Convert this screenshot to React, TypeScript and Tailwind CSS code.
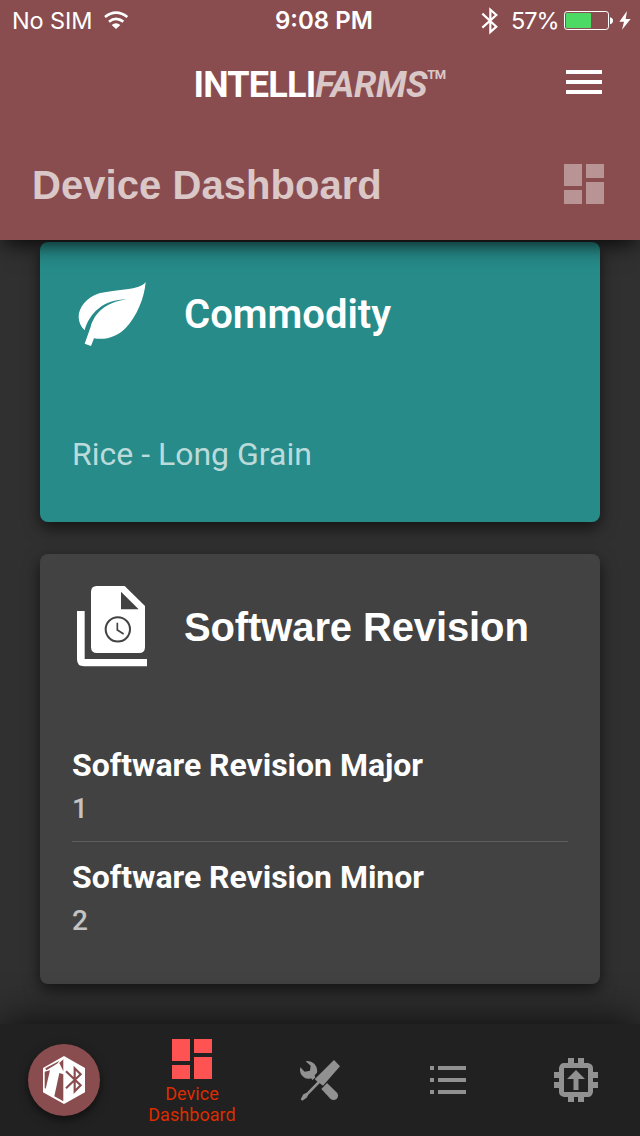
import type { ReactNode } from "react";

function WifiIcon() {
  return (
    <svg width="26" height="20" viewBox="310 33 78 60" fill="none" stroke="#fff" strokeWidth="8">
      <path d="M316 51Q349 25 383 51" />
      <path d="M328 65Q349 48 371 65" />
      <path d="M336 75Q349 65 362 75L349 87Z" fill="#fff" stroke="none" />
    </svg>
  );
}

function BluetoothIcon() {
  return (
    <svg width="18" height="28" viewBox="483 20 54 84" fill="none" stroke="#fff" strokeWidth="6.500">
      <path d="M487 40L529 79L511 95V28L529 44L487 82" />
    </svg>
  );
}

function BatteryIcon() {
  return (
    <svg width="49" height="20" viewBox="732 32 147 60">
      <rect x="733.5" y="33.5" width="132" height="54" rx="8" fill="none" stroke="#fff" strokeWidth="3" />
      <rect x="738" y="38" width="75" height="45" rx="3" fill="#4cd964" />
      <path d="M870 51Q879 53 879 61T870 72Z" fill="#fff" />
    </svg>
  );
}

function BoltIcon() {
  return (
    <svg width="12" height="20" viewBox="896 32 36 60" fill="#fff">
      <path d="M920 32L897 64H911L905 88L931 56H916Z" />
    </svg>
  );
}

function DashboardIcon({ className }: { className: string }) {
  return (
    <svg width="40" height="40" viewBox="0 0 40 40" className={className} fill="currentColor">
      <path d="M0 0H18V22H0ZM22 0H40V14H22ZM22 18H40V40H22ZM0 26H18V40H0Z" />
    </svg>
  );
}

function LeafIcon() {
  return (
    <svg width="68" height="64" viewBox="144 66 204 192" fill="#fff">
      <path d="M347 66C338 78 318 84 290 88C255 93 228 95 208 100C170 111 146 143 146 171C147 189 154 201 164 211C178 160 220 118 290 118C225 128 195 158 182 200L164 251L183 258L192 235C228 241 262 230 287 204C320 170 343 115 347 66Z" />
    </svg>
  );
}

function FileHistoryIcon() {
  return (
    <svg width="70" height="81" viewBox="51 47 210 243">
      <path d="M51 122H74V266H261V288H72Q51 288 51 267Z" fill="#fff" />
      <path d="M110 47H194L255 107V230Q255 248 237 248H111Q93 248 93 230V65Q93 47 110 47Z" fill="#fff" />
      <path d="M183 64V117H236Z" fill="#424242" />
      <g fill="none" stroke="#424242">
        <circle cx="173.500" cy="177" r="36.500" strokeWidth="6" />
        <path d="M172 157V179L191 191" strokeWidth="5" />
      </g>
    </svg>
  );
}

function HexagonLogo() {
  return (
    <svg width="42" height="48" viewBox="129 288 126 144">
      <path d="M192 288L255 324V397L192 432L129 397V324Z" fill="#fff" />
      <g fill="#8a4d4f">
        <path d="M190 298V334L178 309Z" />
        <path d="M136 325L179 302L171 311L139 331Z" />
        <path d="M134 335L150 331L137 386L134 384Z" />
        <path d="M178 339L190 343V424L163 409Z" />
      </g>
      <path d="M198 334L242 376L224 394V325L242 343L198 385" fill="none" stroke="#8a4d4f" strokeWidth="6.500" />
    </svg>
  );
}

function ToolsIcon() {
  return (
    <svg width="40" height="41" viewBox="60 59 120 123" fill="#919191">
      <path d="M162 59L180 78L129 136L119 129L85 163L80 172L67 181L62 177L70 162L80 157L112 124L104 116L110 111Z" />
      <path d="M77 63Q91 60 103 70Q114 82 111 97L104 105L106 111L98 119L93 114Q79 119 68 108Q57 98 61 81L74 94L90 91L92 76Z" />
      <path d="M141 128L171 157Q178 166 170 176Q160 183 151 175L124 146Z" />
    </svg>
  );
}

function ListIcon() {
  return (
    <svg width="36" height="28" viewBox="0 0 36 28" fill="#919191">
      <path d="M0 0H4V4H0ZM8 0H36V4H8ZM0 12H4V16H0ZM8 12H36V16H8ZM0 24H4V28H0ZM8 24H36V28H8Z" />
    </svg>
  );
}

function ChipUpIcon() {
  return (
    <svg width="44" height="44" viewBox="0 0 44 44" fill="#919191">
      <path
        fillRule="evenodd"
        d="M14 0H20V5H24V0H30V5H34Q39 6 39 10V14H44V20H39V24H44V30H39V34Q38 39 34 39H30V44H24V39H20V44H14V39H10Q5 38 5 34V30H0V24H5V20H0V14H5V10Q6 5 10 5H14ZM10 10V34H34V10Z"
      />
      <path d="M22 12L31 21H24.500V32H19.500V21H13Z" />
    </svg>
  );
}

function StatusBar() {
  return (
    <div className="grid h-10 grid-cols-[275px_1fr_auto] items-center text-[24px] leading-10 whitespace-nowrap text-white">
      <div className="flex items-center pl-[12px]">
        <span className="w-[91px] font-[Inter] text-[23.500px] tracking-[-0.1px]">No SIM</span>
        <WifiIcon />
      </div>
      <span className="pt-px font-[Inter] font-semibold">9:08 PM</span>
      <div className="flex items-center pr-[9px]">
        <BluetoothIcon />
        <span className="ml-[12px] w-[53px] font-[Inter] text-[23.500px] tracking-[-1px]">57%</span>
        <BatteryIcon />
        <span className="ml-[6px]">
          <BoltIcon />
        </span>
      </div>
    </div>
  );
}

function Header() {
  return (
    <header className="relative z-10 flex h-[240px] shrink-0 flex-col bg-[#8a4d4f] shadow-[0_8px_20px_-4px_rgba(0,0,0,0.85)]">
      <StatusBar />
      <div className="flex h-[88px] items-center justify-between pr-[38px] pl-[193.5px]">
        <div className="flex items-start pt-0.5 font-[Roboto] text-[36px] leading-[40px] font-bold text-white">
          <span className="tracking-[-0.8px]">INTELLI</span>
          <span className="tracking-[-0.4px] text-white/70 italic">FARMS</span>
          <span className="text-[13px] leading-[20px] tracking-[-0.4px] text-white/70">TM</span>
        </div>
        <button aria-label="Menu" className="mb-1 flex w-9 flex-col gap-1.5">
          <span className="h-1 bg-white" />
          <span className="h-1 bg-white" />
          <span className="h-1 bg-white" />
        </button>
      </div>
      <div className="flex h-[112px] items-center justify-between pr-9 pl-8">
        <h1 className="pt-0.5 font-['Liberation_Sans'] text-[40px] leading-[46px] font-bold tracking-[0.05px] text-white/70">
          Device Dashboard
        </h1>
        <DashboardIcon className="text-white/40" />
      </div>
    </header>
  );
}

function Card({ className, children }: { className: string; children: ReactNode }) {
  return <section className={`shrink-0 rounded-lg shadow-[0_6px_16px_rgba(0,0,0,0.6)] ${className}`}>{children}</section>;
}

function Revision({ label, value }: { label: string; value: string }) {
  return (
    <div className="h-24 whitespace-nowrap">
      <div className="text-[32px] leading-10 font-bold tracking-[-0.03px] text-white">{label}</div>
      <div className="mt-[6px] text-[28px] leading-9 font-medium text-white/70">{value}</div>
    </div>
  );
}

function NavItem({ children }: { children: ReactNode }) {
  return <button className="flex flex-col items-center justify-center">{children}</button>;
}

export default function App() {
  return (
    <div className="flex h-[1136px] w-[640px] flex-col overflow-hidden bg-[#303030] font-[Roboto]">
      <Header />
      <main className="flex flex-1 flex-col gap-8 px-10 pt-0.5">
        <Card className="h-[280px] bg-[#268b89]">
          <div className="flex h-36 items-center">
            <div className="w-36 pl-[38px]">
              <LeafIcon />
            </div>
            <h2 className="pt-0.5 text-[40px] font-semibold text-white">Commodity</h2>
          </div>
          <p className="px-8 text-[32px] leading-[136px] text-white/70">Rice - Long Grain</p>
        </Card>
        <Card className="h-[430px] bg-[#424242]">
          <div className="flex h-36 items-center">
            <div className="w-36 pl-[37px]">
              <FileHistoryIcon />
            </div>
            <h2 className="pt-0.5 font-['Liberation_Sans'] text-[40px] leading-[46px] font-bold tracking-[-0.12px] text-white">
              Software Revision
            </h2>
          </div>
          <div className="px-8 pt-[47px]">
            <Revision label="Software Revision Major" value="1" />
            <div className="mb-[15px] h-px bg-[#5e5e5e]" />
            <Revision label="Software Revision Minor" value="2" />
          </div>
        </Card>
      </main>
      <nav className="relative z-10 grid h-28 shrink-0 grid-cols-5 bg-[#212121] shadow-[0_-4px_40px_rgba(0,0,0,0.7)]">
        <NavItem>
          <span className="flex size-[72px] items-center justify-center rounded-full bg-[#8a4d4f] shadow-[0_4px_10px_rgba(0,0,0,0.55)]">
            <HexagonLogo />
          </span>
        </NavItem>
        <NavItem>
          <DashboardIcon className="mt-[3px] text-[#ff5252]" />
          <span className="mt-1 text-[18px] leading-[21px] tracking-[0.05px] text-[#dd2c00]">
            Device
            <br />
            Dashboard
          </span>
        </NavItem>
        <NavItem>
          <ToolsIcon />
        </NavItem>
        <NavItem>
          <ListIcon />
        </NavItem>
        <NavItem>
          <ChipUpIcon />
        </NavItem>
      </nav>
    </div>
  );
}
